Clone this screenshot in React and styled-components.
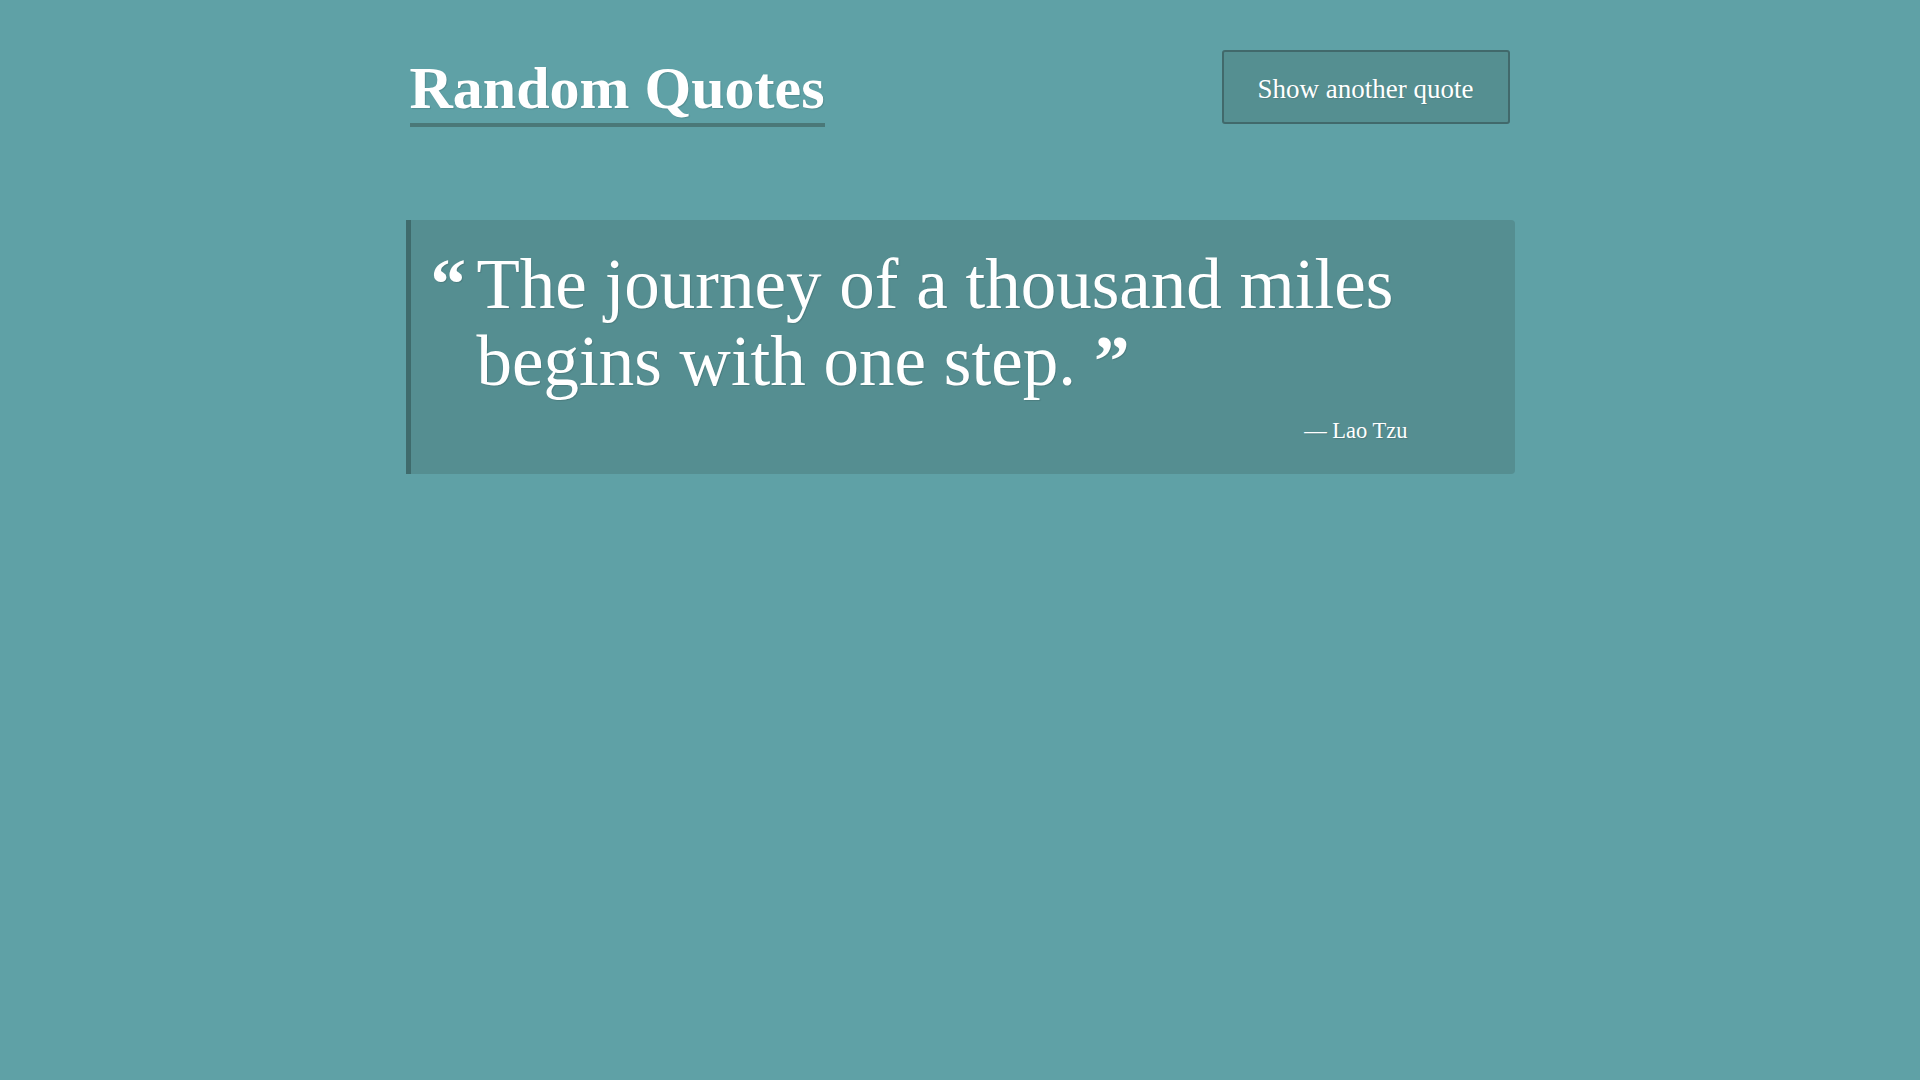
import React from "react"
import styled, { createGlobalStyle } from "styled-components"

const GlobalStyle = createGlobalStyle`
  html, body {
    margin: 0;
    padding: 0;
    background: #5fa1a6;
    min-height: 100%;
  }
  body {
    font-family: "Liberation Serif", "Times New Roman", serif;
    color: #ffffff;
  }
`

const Page = styled.div`
  min-height: 1080px;
  background: #5fa1a6;
`

const Wrapper = styled.div`
  width: 1109px;
  margin: 0 auto;
  padding-top: 50px;
`

const Header = styled.header`
  display: flex;
  justify-content: space-between;
  align-items: flex-start;
  padding: 0 5px 0 4px;
`

const Title = styled.h1`
  margin: 8px 0 0;
  font-size: 60px;
  line-height: 60px;
  font-weight: 700;
  padding-bottom: 5px;
  border-bottom: 4px solid #4a7878;
  text-shadow: 1px 1px 1px rgba(0, 0, 0, 0.12);
`

const Button = styled.button`
  box-sizing: border-box;
  height: 74px;
  width: 288px;
  padding: 4px 0 0;
  line-height: 64px;
  font-family: inherit;
  font-size: 27px;
  color: #ffffff;
  background: #558f91;
  border: 2px solid #41696b;
  border-radius: 3px;
  cursor: pointer;
  text-shadow: 1px 1px 1px rgba(0, 0, 0, 0.1);
`

const Card = styled.blockquote`
  margin: 93px 0 0;
  height: 254px;
  box-sizing: border-box;
  padding: 26px 20px 0 20px;
  background: #558e91;
  border-left: 5px solid #3f6b6c;
  border-radius: 0 4px 4px 0;
  text-shadow: 1px 1px 1px rgba(0, 0, 0, 0.12);
`

const QuoteRow = styled.div`
  display: flex;
  align-items: flex-start;
`

const Mark = styled.span`
  flex: 0 0 46px;
  font-size: 71px;
  line-height: 77px;
  font-weight: 700;
`

const QuoteText = styled.p`
  margin: 0;
  font-size: 71px;
  line-height: 77px;
  font-weight: 400;
`

const CloseMark = styled.span`
  margin-left: 18px;
  font-weight: 700;
`

const Author = styled.cite`
  display: block;
  margin-top: 16px;
  padding-right: 87px;
  text-align: right;
  font-style: normal;
  font-size: 22.5px;
  line-height: 30px;
`

export default function App() {
  return (
    <Page>
      <GlobalStyle />
      <Wrapper>
        <Header>
          <Title>Random Quotes</Title>
          <Button type="button">Show another quote</Button>
        </Header>
        <Card>
          <QuoteRow>
            <Mark>“</Mark>
            <QuoteText>
              The journey of a thousand miles begins with one step.<CloseMark>”</CloseMark>
            </QuoteText>
          </QuoteRow>
          <Author>— Lao Tzu</Author>
        </Card>
      </Wrapper>
    </Page>
  )
}
